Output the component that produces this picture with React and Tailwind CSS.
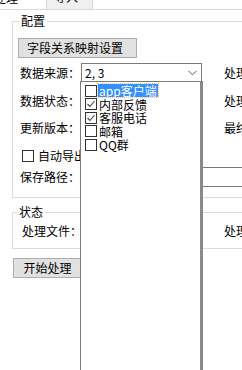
import React from 'react';

const font = { fontFamily: '"Noto Sans CJK SC", "Liberation Sans", sans-serif' };

const Check = ({ checked }) => (
  <span className="w-[12px] h-[12px] border border-[#333] bg-white flex items-center justify-center shrink-0">
    {checked && (
      <svg width="10" height="10" viewBox="0 0 10 10">
        <path d="M1.5 5 L4 7.5 L8.5 2" fill="none" stroke="#444" strokeWidth="1.1" />
      </svg>
    )}
  </span>
);

const Label = ({ children, className = '' }) => (
  <span className={`text-[12px] leading-[20px] text-black whitespace-nowrap ${className}`}>{children}</span>
);

const options = [
  { text: 'app客户端', checked: false, active: true },
  { text: '内部反馈', checked: true },
  { text: '客服电话', checked: true },
  { text: '邮箱', checked: false },
  { text: 'QQ群', checked: false }
];

const App = () => {
  return (
    <div className="w-[242px] h-[370px] bg-white relative overflow-hidden text-black" style={font}>
      {/* tab strip */}
      <div className="h-[10px] flex items-end border-b border-[#d9d9d9] relative">
        <div className="w-[47px] h-[10px] bg-white border-r border-[#d9d9d9] overflow-hidden relative">
          <span className="absolute -top-[9px] -left-[6px] text-[12px] leading-[16px]">处理</span>
        </div>
        <div className="w-[46px] h-[10px] bg-[#f0f0f0] border-r border-[#d9d9d9] overflow-hidden relative">
          <span className="absolute -top-[10px] left-[7px] text-[12px] leading-[16px]">导入</span>
        </div>
      </div>

      <div className="pl-[12px]">
        {/* group 配置 */}
        <div className="relative mt-[11px] w-[260px] h-[177px] border border-[#dcdcdc] pl-[5px] pt-[12px]">
          <span className="absolute -top-[9px] left-[6px] px-[2px] bg-white text-[12px] leading-[16px]">配置</span>
          <button className="w-[119px] h-[20px] bg-[#e1e1e1] border border-[#adadad] text-[12px] leading-[18px] text-left pl-[8px]">
            字段关系映射设置
          </button>

          <div className="flex items-center mt-[5px] h-[20px]">
            <Label className="ml-[2px] w-[61px]">数据来源：</Label>
            <div className="w-[121px] h-[20px] border border-[#7a7a7a] bg-white flex items-center justify-between pl-[3px] pr-[4px]">
              <span className="text-[12px] leading-[16px]">2, 3</span>
              <svg width="9" height="6" viewBox="0 0 9 6">
                <path d="M0.5 0.8 L4.5 4.8 L8.5 0.8" fill="none" stroke="#555" strokeWidth="1" />
              </svg>
            </div>
            <Label className="ml-[22px]">处理</Label>
          </div>

          <div className="flex items-center mt-[8px] h-[20px]">
            <Label className="ml-[2px] w-[204px]">数据状态：</Label>
            <Label>处理</Label>
          </div>

          <div className="flex items-center mt-[7px] h-[20px]">
            <Label className="ml-[2px] w-[204px]">更新版本：</Label>
            <Label>最终</Label>
          </div>

          <div className="flex items-center mt-[8px] h-[20px]">
            <span className="ml-[4px] w-[12px] h-[12px] border border-[#333] bg-white" />
            <Label className="ml-[4px]">自动导出</Label>
          </div>

          <div className="flex items-center mt-[1px] h-[20px]">
            <Label className="ml-[2px] w-[61px]">保存路径：</Label>
            <div className="w-[170px] h-[20px] border border-[#7a7a7a] bg-white" />
          </div>
        </div>

        {/* group 状态 */}
        <div className="relative mt-[14px] w-[260px] h-[37px] border border-[#dcdcdc] pl-[9px] pt-[8px]">
          <span className="absolute -top-[9px] left-[4px] px-[2px] bg-white text-[12px] leading-[16px]">状态</span>
          <div className="flex items-center h-[20px]">
            <Label className="w-[202px]">处理文件：</Label>
            <Label>处理</Label>
          </div>
        </div>

        <button className="ml-[1px] mt-[9px] w-[69px] h-[20px] bg-[#e1e1e1] border border-[#adadad] text-[12px] leading-[18px]">
          开始处理
        </button>
      </div>

      {/* dropdown list overlay */}
      <div className="absolute left-[80px] top-[81px] w-[123px] h-[300px] bg-white border-l border-t border-[#7a7a7a] border-r-[3px] border-r-[#8a8a8a] pt-[2px] pl-[4px]">
        {options.map((o) => (
          <div key={o.text} className="flex items-center h-[13.5px]">
            <Check checked={o.checked} />
            <span
              className={`ml-[1px] pl-[1px] pr-[1px] text-[12px] leading-[13px] whitespace-nowrap ${
                o.active ? 'bg-[#3390ff] text-white outline outline-1 outline-dotted outline-[#f0c080]' : 'text-black'
              }`}
            >
              {o.text}
            </span>
          </div>
        ))}
      </div>
    </div>
  );
};

export default App;
